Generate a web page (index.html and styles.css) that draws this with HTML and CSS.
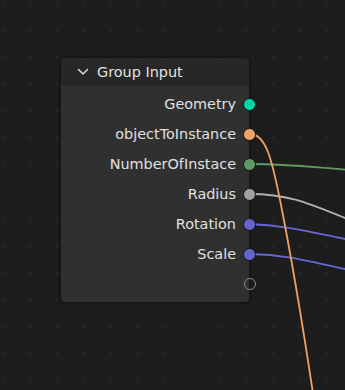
FILE: index.html
```html
<!DOCTYPE html>
<html>
<head>
<meta charset="utf-8">
<link rel="stylesheet" href="styles.css">
</head>
<body>
<div class="canvas">
  <svg class="wires" width="345" height="390" viewBox="0 0 345 390">
    <path class="wire" d="M250 164 C 290 164, 310 167, 350 170" stroke="#5f9a62"/>
    <path class="wire" d="M250 194 C 290 194, 310 204, 350 220" stroke="#b2b2b2"/>
    <path class="wire" d="M250 224 C 290 226, 310 232, 350 240" stroke="#6767d2"/>
    <path class="wire" d="M250 254 C 290 255, 310 262, 350 270" stroke="#6767d2"/>
    <path class="wire" d="M250 134 C 266 134, 272 160, 280 200 C 291 255, 302 320, 314 400" stroke="#eea062"/>
  </svg>
  <div class="node">
    <div class="node-header">
      <svg class="chevron" width="12" height="8" viewBox="0 0 12 8"><path d="M1.5 1.5 L6 6 L10.5 1.5" fill="none" stroke="#dcdcdc" stroke-width="1.5" stroke-linecap="round" stroke-linejoin="round"/></svg>
      <span class="title">Group Input</span>
    </div>
    <div class="node-body">
      <div class="row"><span class="label">Geometry</span><span class="socket geo"></span></div>
      <div class="row"><span class="label">objectToInstance</span><span class="socket obj"></span></div>
      <div class="row"><span class="label">NumberOfInstace</span><span class="socket int"></span></div>
      <div class="row"><span class="label">Radius</span><span class="socket flt"></span></div>
      <div class="row"><span class="label">Rotation</span><span class="socket vec"></span></div>
      <div class="row"><span class="label">Scale</span><span class="socket vec"></span></div>
      <div class="row"><span class="socket empty"></span></div>
    </div>
  </div>
</div>
</body>
</html>
```
FILE: styles.css
```css
html, body {
  margin: 0;
  padding: 0;
}
body {
  width: 345px;
  height: 390px;
  overflow: hidden;
  background: #1d1d1d;
  font-family: "DejaVu Sans", sans-serif;
}
.canvas {
  position: relative;
  width: 345px;
  height: 390px;
  background-color: #1d1d1d;
  background-image: radial-gradient(circle, #2d2d2d 0.9px, transparent 1.3px);
  background-size: 27px 27px;
  background-position: -10.5px -10.5px;
}
.wires {
  position: absolute;
  left: 0;
  top: 0;
}
.wire {
  fill: none;
  stroke-width: 1.8;
}
.node {
  position: absolute;
  left: 60px;
  top: 57px;
  width: 190px;
  height: 246px;
  box-sizing: border-box;
  border: 1px solid #151515;
  border-radius: 5px;
  background: #303030;
  box-shadow: 0 0 3px rgba(0,0,0,0.5);
  display: flex;
  flex-direction: column;
}
.node-header {
  height: 28px;
  background: #272727;
  border-radius: 4px 4px 0 0;
  display: flex;
  align-items: center;
  padding-left: 16px;
  gap: 8px;
  color: #e2e2e2;
  font-size: 14.4px;
}
.chevron {
  display: block;
}
.node-body {
  padding-top: 3px;
  display: flex;
  flex-direction: column;
}
.row {
  height: 30px;
  display: flex;
  align-items: center;
  justify-content: flex-end;
  gap: 7px;
  margin-right: -7px;
}
.label {
  color: #e0e0e0;
  font-size: 14.4px;
}
.socket {
  width: 11px;
  height: 11px;
  border-radius: 50%;
  border: 1px solid #141414;
  position: relative;
  z-index: 1;
}
.geo { background: #00d6a3; }
.obj { background: #eda46a; }
.int { background: #5f9a62; }
.flt { background: #a1a1a1; }
.vec { background: #6464cc; }
.empty {
  background: transparent;
  border: 1.5px solid #8a8a8a;
  width: 10px;
  height: 10px;
}
```
